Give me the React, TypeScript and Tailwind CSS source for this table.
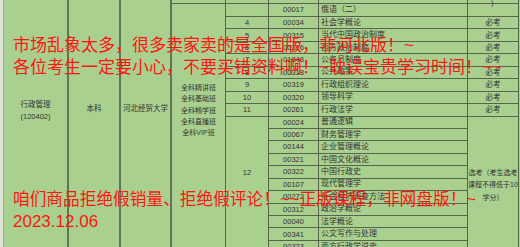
const rows = [
  { n: '', code: '00017', name: '俄语（二）', req: '' },
  { n: '4', code: '00034', name: '社会学概论', req: '必考' },
  { n: '5', code: '00315', name: '当代中国政治制度', req: '必考' },
  { n: '6', code: '00316', name: '西方政治制度', req: '必考' },
  { n: '7', code: '01848', name: '公务员制度', req: '必考' },
  { n: '8', code: '00318', name: '公共政策', req: '必考' },
  { n: '9', code: '00319', name: '行政组织理论', req: '必考' },
  { n: '10', code: '00320', name: '领导科学', req: '必考' },
  { n: '11', code: '00261', name: '行政法学', req: '必考' },
  { n: '', code: '00024', name: '普通逻辑', req: '' },
  { n: '', code: '00067', name: '财务管理学', req: '' },
  { n: '', code: '00144', name: '企业管理概论', req: '' },
  { n: '', code: '00321', name: '中国文化概论', req: '' },
  { n: '', code: '00322', name: '中国行政史', req: '' },
  { n: '', code: '00107', name: '现代管理学', req: '' },
  { n: '', code: '00272', name: '社会经济调查方法', req: '' },
  { n: '', code: '00312', name: '政治学概论', req: '' },
  { n: '', code: '00040', name: '法学概论', req: '' },
  { n: '', code: '00341', name: '公文写作与处理', req: '' },
  { n: '', code: '00323', name: '西方行政学说史', req: '' },
];

const must = rows.slice(1, 9);
const line = 'border-[#56664d]';

export default function App() {
  return (
    <div className="relative w-[520px] h-[247px] overflow-hidden bg-[#a9d08e] flex text-[#333] text-[7.5px] [font-family:'Liberation_Sans','Noto_Sans_CJK_SC',sans-serif]">
      <div className="w-[4px] h-full bg-[#dde4d7] border-r border-[#a3ad9c]" />

      <div className="w-[65px] h-full border-r-2 border-[#62735a] flex flex-col items-center pt-[99px] leading-[12px]">
        <span>行政管理</span>
        <span>(120402)</span>
      </div>
      <div className="w-[52px] h-full border-r-2 border-[#62735a] flex flex-col items-center pt-[103px] leading-[12px]">
        <span>本科</span>
      </div>
      <div className="w-[51px] h-full border-r-2 border-[#62735a] flex flex-col items-center pt-[103px] leading-[12px]">
        <span>河北经贸大学</span>
      </div>

      {/* 班型 */}
      <div className={`w-[54px] h-full border-r ${line} flex flex-col`}>
        <div className={`h-[4px] shrink-0 border-b ${line}`} />
        <div className="flex flex-col items-center pt-[78px] leading-[11.3px] text-[7px]">
          <span>全科精讲班</span>
          <span>全科基础班</span>
          <span>全科畅学班</span>
          <span>全科直播班</span>
          <span>全科VIP班</span>
        </div>
      </div>

      {/* 序号 */}
      <div className={`w-[43px] h-full border-r ${line} flex flex-col`}>
        <div className={`h-[4px] shrink-0 border-b ${line}`} />
        <div className={`h-[13px] shrink-0 border-b ${line}`} />
        {must.map((r) => (
          <div key={r.code} className={`h-[12.44px] shrink-0 border-b ${line} flex items-center justify-center`}>
            {r.n}
          </div>
        ))}
        <div className="flex-1 flex justify-center pt-[50px]">12</div>
      </div>

      {/* 代码 */}
      <div className={`w-[50px] h-full border-r ${line} flex flex-col`}>
        <div className={`h-[4px] shrink-0 border-b ${line}`} />
        {rows.map((r, i) => (
          <div key={r.code} className={`${i === 0 ? 'h-[13px]' : 'h-[12.44px]'} shrink-0 border-b ${line} flex items-center justify-center`}>
            {r.code}
          </div>
        ))}
      </div>

      {/* 课程名称 */}
      <div className={`w-[149px] h-full border-r ${line} flex flex-col`}>
        <div className={`h-[4px] shrink-0 border-b ${line}`} />
        {rows.map((r, i) => (
          <div key={r.code} className={`${i === 0 ? 'h-[13px]' : 'h-[12.44px]'} shrink-0 border-b ${line} flex items-center pl-[2px] text-[8px]`}>
            {r.name}
          </div>
        ))}
      </div>

      {/* 考试类型 */}
      <div className={`w-[51px] h-full border-r ${line} flex flex-col`}>
        <div className={`h-[4px] shrink-0 border-b ${line} relative`}>
          <span className="absolute left-[23px] -top-[1px] leading-none">)</span>
        </div>
        <div className={`h-[13px] shrink-0 border-b ${line}`} />
        {must.map((r) => (
          <div key={r.code} className={`h-[12.44px] shrink-0 border-b ${line} flex items-center justify-center`}>
            {r.req}
          </div>
        ))}
        <div className="flex-1 flex flex-col items-center pt-[50px] leading-[12.5px] text-[7px] whitespace-nowrap">
          <span>选考（考生选考</span>
          <span>课程不得低于10</span>
          <span>学分）</span>
        </div>
      </div>

      {/* 红字 */}
      <div className="absolute left-[13px] top-[35px] text-[17px] leading-[22px] text-[#ff1414] whitespace-nowrap">
        <div>市场乱象太多，很多卖家卖的是全国版，非河北版！~</div>
        <div>各位考生一定要小心，不要买错资料啊！~耽误宝贵学习时间！~~</div>
      </div>
      <div className="absolute left-[13px] top-[189px] leading-[22px] text-[#ff1414] whitespace-nowrap">
        <div className="text-[16.7px]">咱们商品拒绝假销量、拒绝假评论！~~正版课程，非网盘版！~</div>
        <div className="text-[17px]">2023.12.06</div>
      </div>
    </div>
  );
}
